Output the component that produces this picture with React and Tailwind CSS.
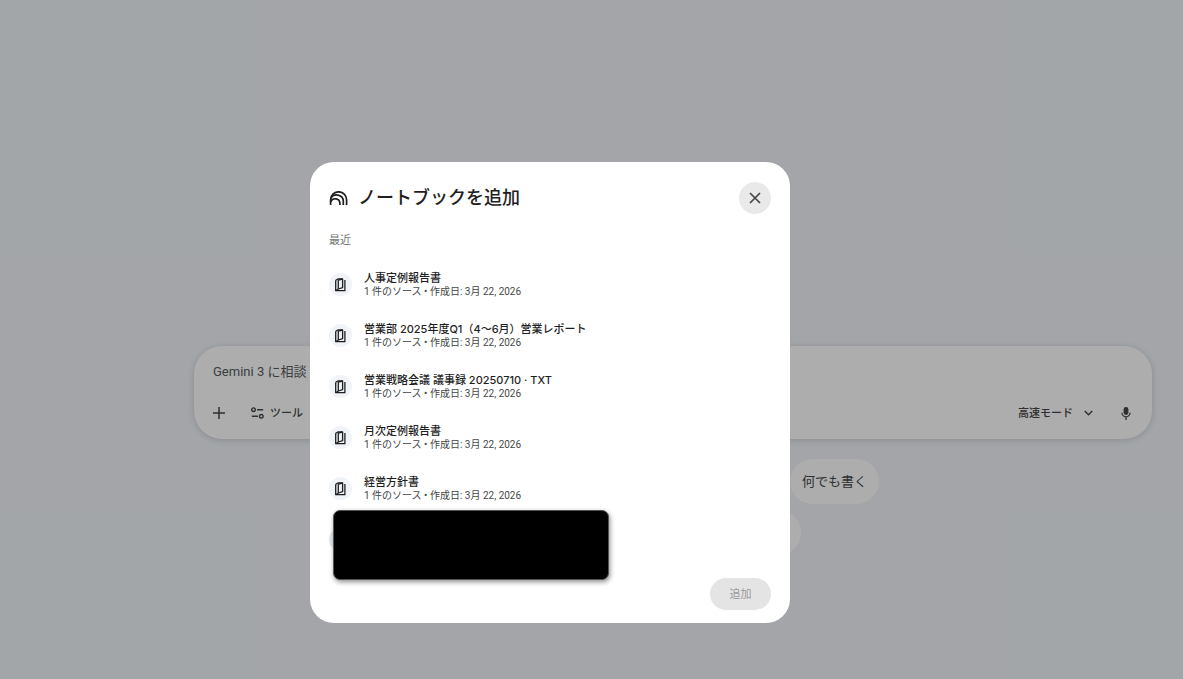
import { useState } from 'react';

const notebooks = [
  '人事定例報告書',
  '営業部 2025年度Q1（4～6月）営業レポート',
  '営業戦略会議 議事録 20250710 · TXT',
  '月次定例報告書',
  '経営方針書',
];

const NotebookLogo = () => (
  <svg className="h-[14px] w-[19px] shrink-0" viewBox="0 0 19 14" fill="none" stroke="#1f1f1f" strokeWidth="1.7">
    <path d="M1.6 14V8.8a8 8 0 0 1 16 0V14" />
    <path d="M1.7 7.7a6.6 6.4 0 0 1 12.6 2.6V14" />
    <path d="M1.7 11a4.7 4.5 0 0 1 9.2 1V14" />
  </svg>
);

const BookIcon = () => (
  <svg className="h-[14px] w-[13px]" viewBox="0 0 13 14" fill="none" stroke="#1f1f1f" strokeWidth="1.3" strokeLinejoin="round">
    <path d="M1.7 2.3v10.4h9.2V2" />
    <path d="M1.7 2.3 3.9 1h4.7v8.6L4.3 11" />
    <path d="M1.7 12.7 4.3 11V2.2L8.6 1" />
  </svg>
);

const PlusIcon = () => (
  <svg className="h-3 w-3" viewBox="0 0 12 12" fill="none" stroke="#444746" strokeWidth="1.5">
    <path d="M6 0v12M0 6h12" />
  </svg>
);

const ToolsIcon = () => (
  <svg className="h-3 w-[13px]" viewBox="0 0 13 12" fill="none" stroke="#444746" strokeWidth="1.4">
    <circle cx="2.5" cy="2.7" r="1.8" />
    <path d="M6 2.7h6.2M.8 9.3H7" />
    <circle cx="10.3" cy="9.3" r="1.8" />
  </svg>
);

const ChevronIcon = () => (
  <svg className="h-[6px] w-[9px]" viewBox="0 0 9 6" fill="none" stroke="#444746" strokeWidth="1.5">
    <path d="m.8 1 3.7 3.7L8.2 1" />
  </svg>
);

const MicIcon = () => (
  <svg className="h-[13px] w-[10px]" viewBox="0 0 10 13">
    <rect x="2.6" y="0" width="4.8" height="8" rx="2.4" fill="#444746" />
    <path d="M1 5.8a4 4 0 0 0 8 0M5 9.8V13" fill="none" stroke="#444746" strokeWidth="1.3" />
  </svg>
);

const CloseIcon = () => (
  <svg className="h-3 w-3" viewBox="0 0 12 12" fill="none" stroke="#444746" strokeWidth="1.7">
    <path d="m1 1 10 10M11 1 1 11" />
  </svg>
);

const NotebookItem = ({ title }) => (
  <li>
    <button type="button" className="flex h-[51px] w-full items-center gap-3 text-left">
      <span className="flex h-[23px] w-[23px] shrink-0 items-center justify-center rounded-full bg-[#f0f4f9]">
        <BookIcon />
      </span>
      <span className="flex flex-col">
        <span className="font-['Inter','Noto_Sans_CJK_JP',sans-serif] text-[11px] leading-[14px] font-medium text-[#1f1f1f]">{title}</span>
        <span className="font-['Roboto','Noto_Sans_CJK_JP',sans-serif] text-[10px] leading-[13px] text-[#444746]">1 件のソース • 作成日: 3月 22, 2026</span>
      </span>
    </button>
  </li>
);

const Composer = () => {
  const [prompt, setPrompt] = useState('');

  return (
    <div className="rounded-[28px] bg-white pt-[15px] pr-[21px] pb-4 pl-[19px] shadow-[0_1px_6px_0_rgba(0,0,0,0.16)]">
      <input
        type="text"
        aria-label="Gemini 3 に相談"
        placeholder="Gemini 3 に相談"
        value={prompt}
        onChange={(e) => setPrompt(e.target.value)}
        className="block h-5 w-full bg-transparent font-['Roboto','Noto_Sans_CJK_JP',sans-serif] text-[13px] text-[#444746] outline-none placeholder:text-[#575b5f]"
      />
      <div className="mt-[22px] flex h-5 items-center justify-between text-[11px] font-medium text-[#444746]">
        <div className="flex items-center gap-[26px]">
          <button type="button" aria-label="追加"><PlusIcon /></button>
          <button type="button" className="flex items-center gap-[6px]">
            <ToolsIcon />
            ツール
          </button>
        </div>
        <div className="flex items-center gap-7">
          <button type="button" className="flex items-center gap-[11px]">
            高速モード
            <ChevronIcon />
          </button>
          <button type="button" aria-label="マイク"><MicIcon /></button>
        </div>
      </div>
    </div>
  );
};

export default function App() {
  return (
    <div className="relative min-h-screen bg-[#f0f4f9] font-['Open_Sans','Noto_Sans_CJK_JP',sans-serif]">
      {/* Page behind the dialog */}
      <main className="pt-[346px] pr-[31px] pl-[194px]">
        <Composer />
        <div className="mx-auto mt-5 flex w-[412px] justify-end">
          <button type="button" className="h-[45px] rounded-full bg-white px-3 text-[13px] text-[#444746]">
            何でも書く
          </button>
        </div>
        <div className="mx-auto mt-[6px] h-[45px] w-64 rounded-full bg-white"></div>
      </main>

      {/* Dialog */}
      <div className="absolute inset-0 flex items-start justify-center bg-black/32 pt-[162px] pr-[83px]">
        <div role="dialog" aria-labelledby="dialog-title" className="relative w-[480px] rounded-[24px] bg-white px-[19px] pt-5 pb-[13px]">
          <div className="flex h-8 items-center justify-between">
            <div className="flex items-center gap-[10px]">
              <NotebookLogo />
              <h1 id="dialog-title" className="pb-[2px] text-lg leading-7 font-medium text-[#1f1f1f]">ノートブックを追加</h1>
            </div>
            <button type="button" aria-label="閉じる" className="flex h-8 w-8 items-center justify-center rounded-full bg-[#e9e9e9]">
              <CloseIcon />
            </button>
          </div>

          <h2 className="mt-4 text-[11px] leading-5 text-[#747775]">最近</h2>
          <ul className="mt-[9px]">
            {notebooks.map((title) => (
              <NotebookItem key={title} title={title} />
            ))}
            <li className="flex h-[51px] items-center">
              <span className="h-[23px] w-[23px] rounded-full bg-[#dfe7ee]"></span>
            </li>
          </ul>

          <div className="mt-[13px] flex justify-end">
            <button type="button" disabled className="h-8 w-[61px] rounded-full bg-[#e4e4e4] text-[11px] text-[#9b9b9b]">
              追加
            </button>
          </div>

          {/* Covered entry */}
          <div className="absolute top-[348px] left-[23px] h-[70px] w-[276px] rounded-[7px] border border-[#555] bg-black shadow-[1px_2px_5px_rgba(0,0,0,0.45)]"></div>
        </div>
      </div>
    </div>
  );
}
